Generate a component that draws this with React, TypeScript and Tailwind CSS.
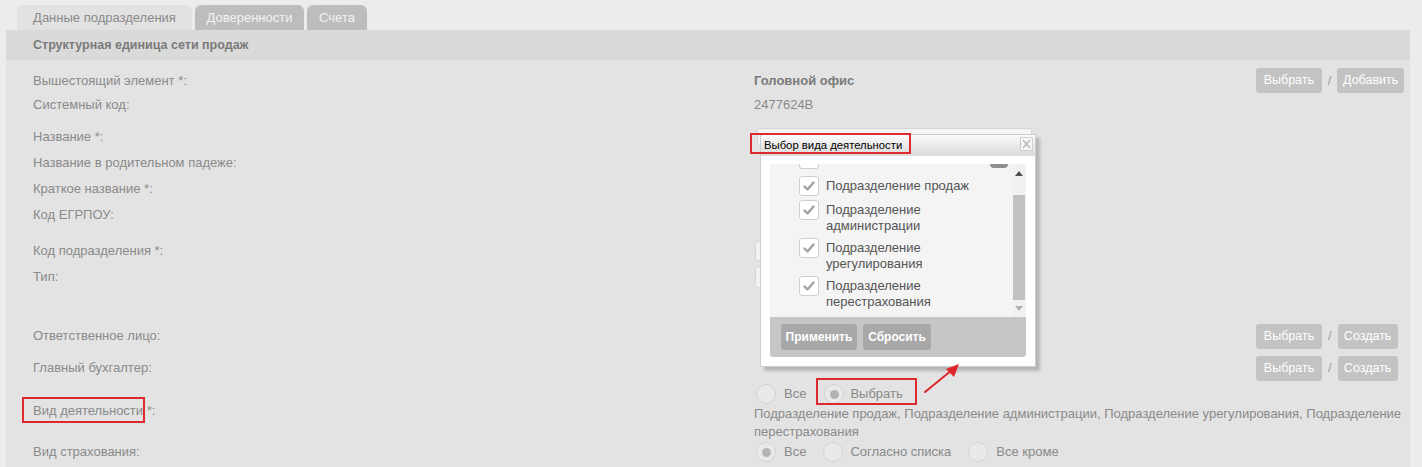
import React from "react";

const Radio = ({ checked = false }: { checked?: boolean }) => (
  <span className="w-[20px] h-[20px] rounded-full border border-[#d3d3d3] bg-[#e9e9e9] flex items-center justify-center shrink-0">
    {checked && <span className="w-[9px] h-[9px] rounded-full bg-[#b3b3b3]" />}
  </span>
);

const Check = () => (
  <span className="w-[20px] h-[20px] rounded-[3px] border border-[#cfcfcf] bg-white flex items-center justify-center shrink-0">
    <svg width="14" height="14" viewBox="0 0 14 14">
      <path d="M2.5 7.5 L5.5 10.5 L11.5 3.5" fill="none" stroke="#a3a3a3" strokeWidth="2.4" strokeLinecap="round" strokeLinejoin="round" />
    </svg>
  </span>
);

const GrayBtn = ({ children, w }: { children: React.ReactNode; w: string }) => (
  <span className={`${w} h-[25px] rounded-[3px] bg-[#c3c3c3] text-white text-[12.5px] flex items-center justify-center`}>
    {children}
  </span>
);

const Pair = ({ a, b, bw }: { a: string; b: string; bw: string }) => (
  <div className="w-[148px] flex items-center justify-start shrink-0">
    <GrayBtn w="w-[66px]">{a}</GrayBtn>
    <span className="mx-[6px] text-[#9c9c9c] text-[13px]">/</span>
    <GrayBtn w={bw}>{b}</GrayBtn>
  </div>
);

const Row = ({
  label,
  h,
  mt = "",
  children,
  right,
}: {
  label: string;
  h: string;
  mt?: string;
  children?: React.ReactNode;
  right?: React.ReactNode;
}) => (
  <div className={`flex items-center ${h} ${mt}`}>
    <div className="w-[721px] shrink-0">{label}</div>
    <div className="flex-1 flex items-center">{children}</div>
    {right}
  </div>
);

export default function App() {
  return (
    <div className="relative w-[1422px] h-[467px] overflow-hidden bg-[#ececec] font-['Liberation_Sans',Arial,sans-serif] text-[13px] text-[#8a8a8a]">
      {/* Tabs */}
      <div className="flex pl-[17px] pt-[5px] gap-[3px] h-[30px]">
        <div className="w-[175px] h-[25px] rounded-t-[6px] bg-[#e2e2e2] flex items-center justify-center text-[#8a8a8a] text-[13px]">
          Данные подразделения
        </div>
        <div className="w-[109px] h-[25px] rounded-t-[6px] bg-[#bdbdbd] flex items-center justify-center text-[#f3f3f3] text-[13px]">
          Доверенности
        </div>
        <div className="w-[60px] h-[25px] rounded-t-[6px] bg-[#bdbdbd] flex items-center justify-center text-[#f3f3f3] text-[13px]">
          Счета
        </div>
      </div>

      {/* Panel */}
      <div className="ml-[6px] w-[1404px] h-[437px] bg-[#e3e3e3]">
        <div className="h-[30px] bg-[#dadada] pl-[27px] flex items-center text-[#7a7a7a] font-bold text-[12.5px]">
          Структурная единица сети продаж
        </div>
        <div className="pl-[27px] pr-[6px] pt-[8px]">
          <Row label="Вышестоящий элемент *:" h="h-[25px]" right={<Pair a="Выбрать" b="Добавить" bw="w-[67px]" />}>
            <span className="font-bold text-[#7a7a7a]">Головной офис</span>
          </Row>
          <Row label="Системный код:" h="h-[24px]">
            <span>2477624В</span>
          </Row>
          <Row label="Название *:" h="h-[26px]" mt="mt-[7px]">
            <span className="ml-[3px] w-[275px] h-[18px] border border-[#d6d6d6] rounded-[3px] bg-[#f4f4f4]" />
          </Row>
          <Row label="Название в родительном падеже:" h="h-[26px]" />
          <Row label="Краткое название *:" h="h-[26px]" />
          <Row label="Код ЕГРПОУ:" h="h-[26px]" />
          <Row label="Код подразделения *:" h="h-[26px]" mt="mt-[10px]">
            <span className="ml-[1px] w-[280px] h-[20px] border border-[#d6d6d6] rounded-[3px] bg-[#f2f2f2]" />
          </Row>
          <Row label="Тип:" h="h-[26px]">
            <span className="ml-[1px] w-[280px] h-[22px] border border-[#d6d6d6] rounded-[3px] bg-[#f2f2f2]" />
          </Row>
          <Row label="Ответственное лицо:" h="h-[26px]" mt="mt-[33px]" right={<Pair a="Выбрать" b="Создать" bw="w-[60px]" />} />
          <Row label="Главный бухгалтер:" h="h-[26px]" mt="mt-[6px]" right={<Pair a="Выбрать" b="Создать" bw="w-[60px]" />} />

          <div className="flex items-start mt-[3px]">
            <div className="w-[721px] shrink-0 pt-[19px] leading-[16px]">Вид деятельности *:</div>
            <div className="flex-1">
              <div className="h-[20px] flex items-center">
                <span className="ml-[2px]"><Radio /></span>
                <span className="ml-[8px]">Все</span>
                <span className="ml-[18px]"><Radio checked /></span>
                <span className="ml-[6px]">Выбрать</span>
              </div>
              <div className="leading-[18px] mt-[1px]">
                Подразделение продаж, Подразделение администрации, Подразделение урегулирования, Подразделение перестрахования
              </div>
            </div>
          </div>

          <div className="flex items-center h-[20px] mt-[1px]">
            <div className="w-[721px] shrink-0">Вид страхования:</div>
            <div className="flex-1 flex items-center">
              <span className="ml-[2px]"><Radio checked /></span>
              <span className="ml-[8px]">Все</span>
              <span className="ml-[17px]"><Radio /></span>
              <span className="ml-[7px]">Согласно списка</span>
              <span className="ml-[17px]"><Radio /></span>
              <span className="ml-[8px]">Все кроме</span>
            </div>
          </div>
        </div>
      </div>

      {/* Modal */}
      <div className="absolute left-[760px] top-[134px] w-[276px] h-[233px] bg-white border border-[#cdcdcd] shadow-[4px_4px_3px_rgba(0,0,0,0.2)] flex flex-col">
        <div className="relative h-[21px] bg-linear-to-b from-[#fbfbfb] to-[#dadada] flex items-center pl-[3px] text-[11.3px] text-black">
          Выбор вида деятельности
          <span className="absolute right-[2px] top-[2px] w-[13px] h-[14px] border border-[#cfcfcf] bg-[#f5f5f5] flex items-center justify-center">
            <svg width="9" height="10" viewBox="0 0 9 10">
              <path d="M1 1 L8 9 M8 1 L1 9" stroke="#b5b5b5" strokeWidth="1.2" />
            </svg>
          </span>
        </div>
        <div className="px-[9px] pt-[8px]">
          <div className="relative h-[153px] bg-[#f4f4f4] overflow-hidden">
            <span className="absolute left-[29px] top-[-15px] w-[20px] h-[20px] rounded-[3px] border border-[#cfcfcf] bg-white" />
            <span className="absolute left-[220px] top-[-6px] w-[18px] h-[10px] rounded-[4px] bg-[#8f8f8f]" />
            <div className="pl-[29px] pt-[12px] flex flex-col gap-[4px] text-[#555] text-[13px]">
              <div className="flex items-start gap-[7px]">
                <Check />
                <span className="leading-[16px] pt-[2px]">Подразделение продаж</span>
              </div>
              <div className="flex items-start gap-[7px]">
                <Check />
                <span className="leading-[16px] pt-[2px]">Подразделение<br />администрации</span>
              </div>
              <div className="flex items-start gap-[7px]">
                <Check />
                <span className="leading-[16px] pt-[2px]">Подразделение<br />урегулирования</span>
              </div>
              <div className="flex items-start gap-[7px]">
                <Check />
                <span className="leading-[16px] pt-[2px]">Подразделение<br />перестрахования</span>
              </div>
            </div>
            {/* scrollbar */}
            <div className="absolute right-[1px] top-0 bottom-0 w-[12px] bg-[#f1f1f1] flex flex-col items-center">
              <svg className="mt-[7px]" width="8" height="5" viewBox="0 0 8 5">
                <path d="M0 5 L4 0 L8 5 Z" fill="#505050" />
              </svg>
              <div className="mt-[19px] w-[12px] h-[105px] bg-[#c1c1c1]" />
              <svg className="mt-[6px]" width="8" height="5" viewBox="0 0 8 5">
                <path d="M0 0 L8 0 L4 5 Z" fill="#b0b0b0" />
              </svg>
            </div>
          </div>
          <div className="h-[40px] bg-[#c6c6c6] rounded-b-[3px] flex items-center gap-[6px] pl-[11px]">
            <span className="w-[76px] h-[26px] rounded-[3px] bg-[#a8a8a8] text-white font-bold text-[12px] flex items-center justify-center">
              Применить
            </span>
            <span className="w-[68px] h-[26px] rounded-[3px] bg-[#a8a8a8] text-white font-bold text-[12px] flex items-center justify-center">
              Сбросить
            </span>
          </div>
        </div>
      </div>

      {/* Annotations */}
      <div className="absolute left-[750px] top-[133px] w-[161px] h-[21px] border-2 border-[#dd2a2f]" />
      <div className="absolute left-[816px] top-[378px] w-[101px] h-[27px] border-2 border-[#dd2a2f]" />
      <div className="absolute left-[22px] top-[397px] w-[123px] h-[26px] border-2 border-[#dd2a2f]" />
      <svg className="absolute left-[920px] top-[360px]" width="44" height="36" viewBox="0 0 44 36">
        <path d="M5 32 L32 10" stroke="#e0262b" strokeWidth="2" strokeLinecap="round" />
        <path d="M39 4 L26 9 L34 17 Z" fill="#e0262b" />
      </svg>
    </div>
  );
}
